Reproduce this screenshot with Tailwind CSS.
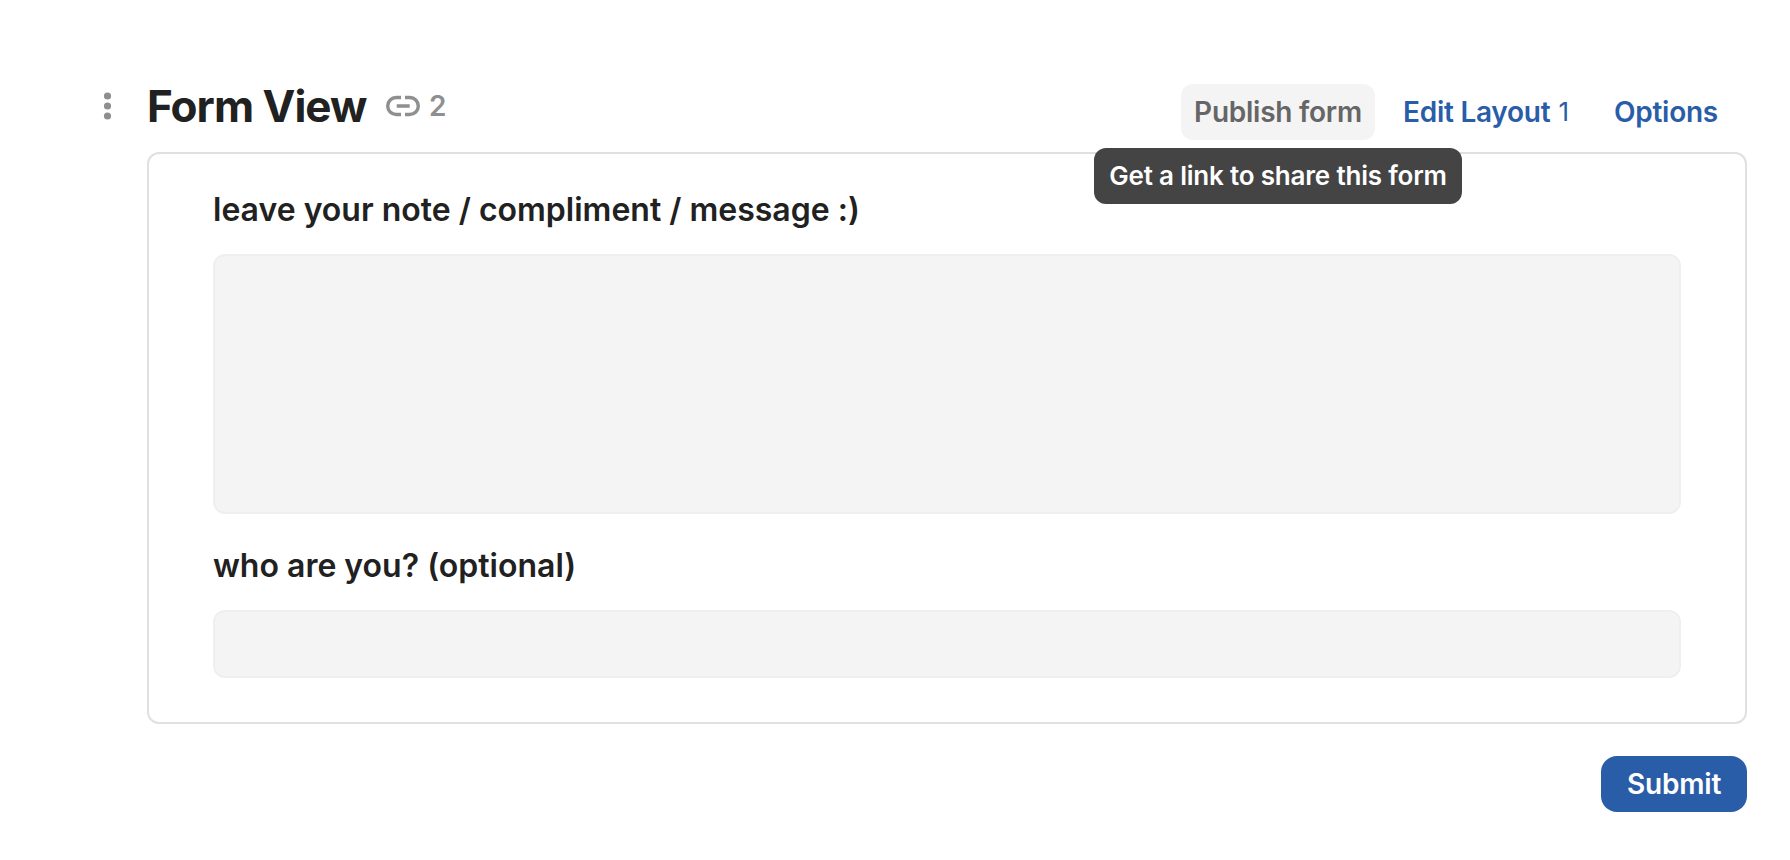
<!DOCTYPE html>
<html lang="en">
	<head>
		<meta charset="UTF-8" />
		<title>Form View</title>
		<script src="https://cdn.jsdelivr.net/npm/@tailwindcss/browser@4"></script>
	</head>
	<body class="bg-white font-['Inter',sans-serif] text-[#212121]">
		<main class="w-[1747px] pl-[103px] pt-[84px]">
			<header class="flex h-[68px] items-start">
				<button class="mr-[34px] h-11 w-[10px]" aria-label="View menu">
					<svg width="10" height="44" viewBox="0 0 10 44" fill="#8f8f8f">
						<circle cx="4.5" cy="12" r="3.6" />
						<circle cx="4.5" cy="22" r="3.6" />
						<circle cx="4.5" cy="32" r="3.6" />
					</svg>
				</button>
				<h1 class="w-[239px] whitespace-nowrap text-[44px] leading-[44px] font-bold tracking-[-0.022em]">Form View</h1>
				<div class="flex h-11 items-center gap-[9px] text-[28px] leading-[44px] font-semibold text-[#8f8f8f]">
					<svg width="34" height="22" viewBox="0 0 34 22" fill="none" stroke="#8f8f8f" stroke-width="3.4">
						<path d="M15 2.5H10.2a8.5 8.5 0 0 0 0 17H15M19 2.5h4.8a8.5 8.5 0 0 1 0 17H19M10.7 11h13" />
					</svg>
					<span>2</span>
				</div>

				<nav class="ml-auto flex text-[28px] leading-[56px] font-semibold tracking-[-0.009em] whitespace-nowrap text-[#2a5da8]">
					<div class="relative mr-[14px]">
						<button class="h-14 w-[194px] rounded-xl bg-[#f4f4f4] text-[#666]">Publish form</button>
						<div class="absolute top-16 left-[-87px] h-14 w-[368px] rounded-xl bg-[#444] text-center text-[26px] font-semibold tracking-[-0.0075em] text-white">Get a link to share this form</div>
					</div>
					<button class="mr-[14px] flex h-14 w-[196px] pl-[14px]">Edit Layout<span class="ml-2 text-[26px] leading-[55px] font-normal">1</span></button>
					<button class="h-14 w-[134px]">Options</button>
					<span class="w-[14px]"></span>
				</nav>
			</header>

			<form class="ml-11">
				<div class="flex h-[572px] flex-col rounded-xl border-2 border-[#e0e0e0] px-16 pt-9 text-[32px] font-semibold">
					<label for="note" class="h-16 leading-[40px]">leave your note / compliment / message :)</label>
					<textarea id="note" class="h-[260px] shrink-0 resize-none rounded-xl border-2 border-[#efefef] bg-[#f4f4f4]"></textarea>
					<label for="name" class="mt-8 h-16 leading-[40px]">who are you? (optional)</label>
					<input id="name" type="text" class="h-[68px] shrink-0 rounded-xl border-2 border-[#efefef] bg-[#f4f4f4]" />
				</div>
				<button type="button" class="mt-8 ml-auto block h-14 w-[146px] rounded-2xl bg-[#2a5da8] text-[28px] leading-[56px] font-semibold tracking-[-0.006em] text-white">Submit</button>
			</form>
		</main>
	</body>
</html>
